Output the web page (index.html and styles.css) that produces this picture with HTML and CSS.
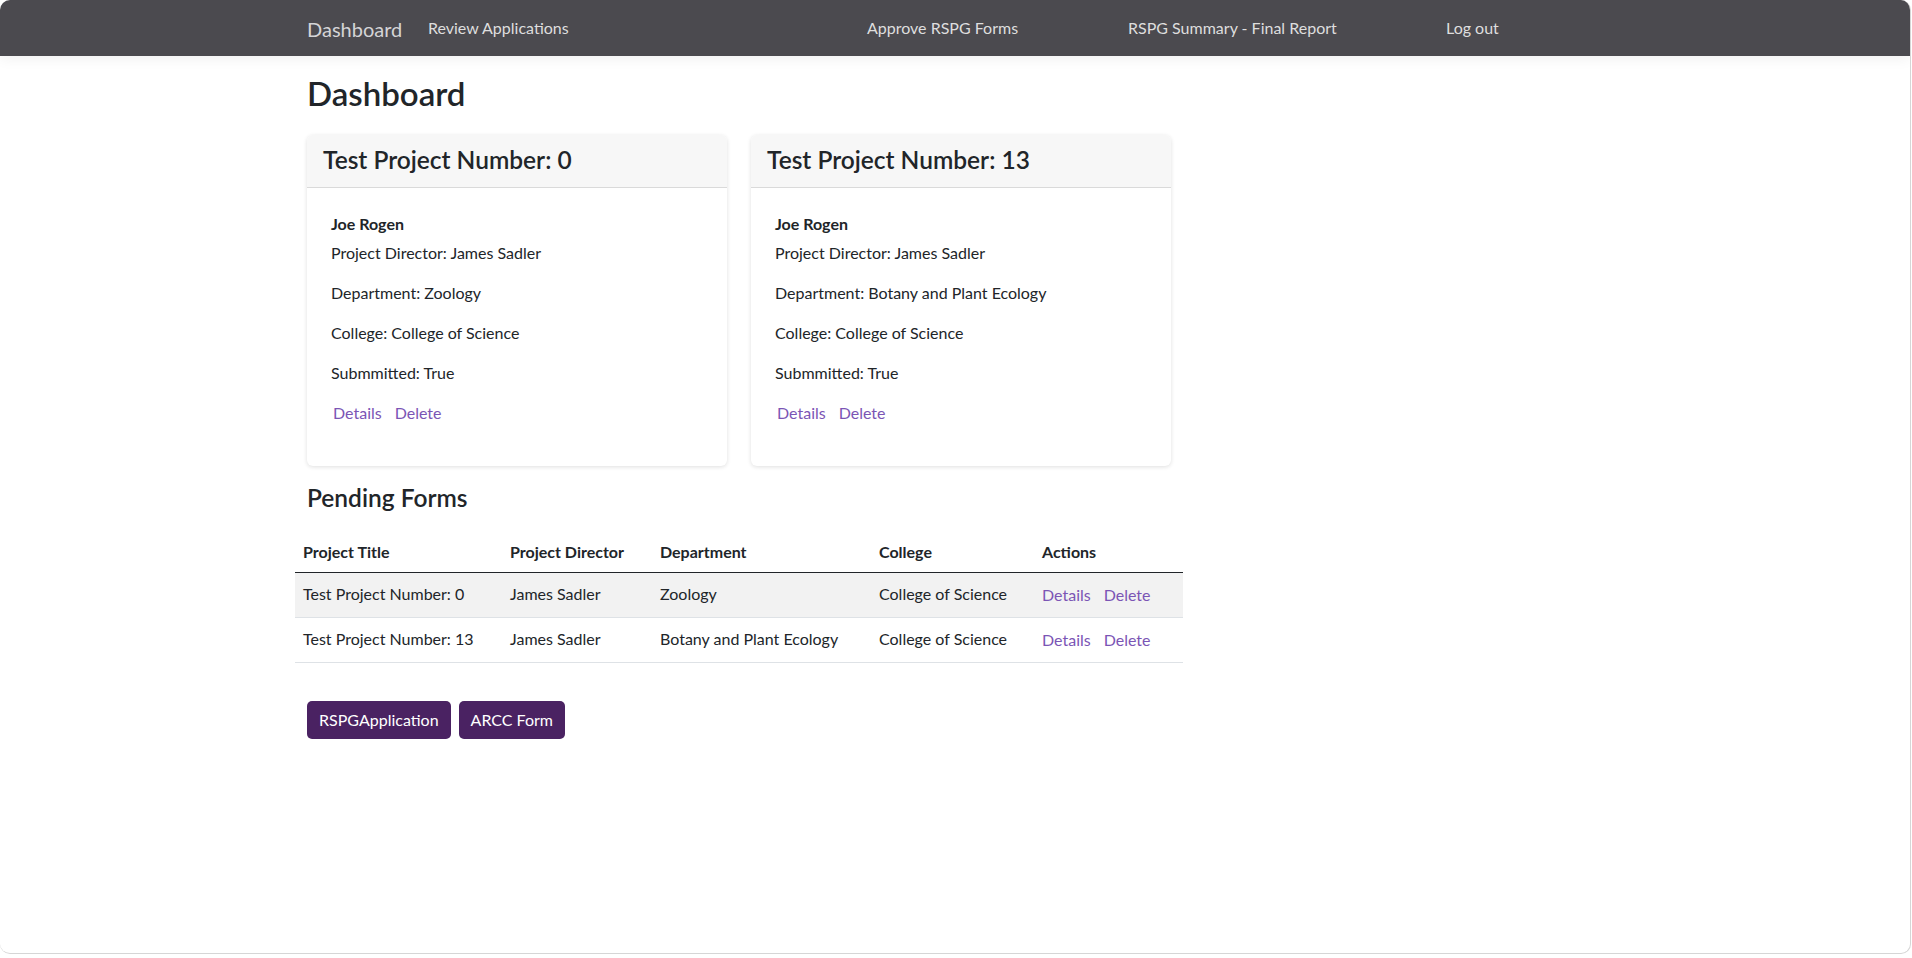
FILE: index.html
```html
<!DOCTYPE html>
<html lang="en">
<head>
<meta charset="utf-8">
<title>Dashboard</title>
<link rel="stylesheet" href="styles.css">
</head>
<body>
<div class="window">
  <header class="navbar">
    <nav class="nav-inner">
      <a class="brand" href="#">Dashboard</a>
      <a class="nav-link" href="#">Review Applications</a>
      <a class="nav-link" href="#">Approve RSPG Forms</a>
      <a class="nav-link" href="#">RSPG Summary - Final Report</a>
      <a class="nav-link" href="#">Log out</a>
    </nav>
  </header>
  <main class="container">
    <h1 class="page-title">Dashboard</h1>
    <div class="cards">
      <section class="card">
        <div class="card-header"><h4 class="card-title">Test Project Number: 0</h4></div>
        <div class="card-body">
          <h6 class="owner">Joe Rogen</h6>
          <p>Project Director: James Sadler</p>
          <p>Department: Zoology</p>
          <p>College: College of Science</p>
          <p>Submmitted: True</p>
          <div class="links"><a href="#">Details</a><a href="#">Delete</a></div>
        </div>
      </section>
      <section class="card">
        <div class="card-header"><h4 class="card-title">Test Project Number: 13</h4></div>
        <div class="card-body">
          <h6 class="owner">Joe Rogen</h6>
          <p>Project Director: James Sadler</p>
          <p>Department: Botany and Plant Ecology</p>
          <p>College: College of Science</p>
          <p>Submmitted: True</p>
          <div class="links"><a href="#">Details</a><a href="#">Delete</a></div>
        </div>
      </section>
    </div>
    <h4 class="section-title">Pending Forms</h4>
    <table class="forms-table">
      <colgroup>
        <col class="c1"><col class="c2"><col class="c3"><col class="c4"><col class="c5">
      </colgroup>
      <thead>
        <tr><th>Project Title</th><th>Project Director</th><th>Department</th><th>College</th><th>Actions</th></tr>
      </thead>
      <tbody>
        <tr class="striped">
          <td>Test Project Number: 0</td><td>James Sadler</td><td>Zoology</td><td>College of Science</td>
          <td><div class="links"><a href="#">Details</a><a href="#">Delete</a></div></td>
        </tr>
        <tr>
          <td>Test Project Number: 13</td><td>James Sadler</td><td>Botany and Plant Ecology</td><td>College of Science</td>
          <td><div class="links"><a href="#">Details</a><a href="#">Delete</a></div></td>
        </tr>
      </tbody>
    </table>
    <div class="buttons">
      <a class="btn" href="#">RSPGApplication</a>
      <a class="btn" href="#">ARCC Form</a>
    </div>
  </main>
</div>
</body>
</html>
```
FILE: styles.css
```css
* { box-sizing: border-box; }
html, body { margin: 0; padding: 0; background: #fff; }
body {
  font-family: Lato, "Liberation Sans", sans-serif;
  font-size: 16px;
  line-height: 1.5;
  color: #212529;
}
a { text-decoration: none; }

.window {
  width: 1911px;
  height: 954px;
  border: 1px solid #d6d6d6;
  border-top: none;
  border-left: none;
  border-radius: 10px;
  overflow: hidden;
  background: #fff;
}

.navbar {
  height: 56px;
  background: #4b4a4f;
  box-shadow: 0 4px 12px rgba(0, 0, 0, 0.05);
  position: relative;
}
.nav-inner {
  height: 100%;
  padding-left: 307px;
  display: grid;
  grid-template-columns: 121px 439px 261px 318px auto;
  align-items: center;
}
.brand {
  font-size: 20px;
  color: #d4d4d6;
  line-height: 1;
  padding-top: 2px;
}
.nav-link {
  font-size: 16px;
  color: #dedede;
  line-height: 1;
}

.container {
  padding-left: 307px;
  width: 1200px;
}
.page-title {
  margin: 18px 0 23px;
  font-size: 33px;
  font-weight: 600;
  line-height: 38px;
}

.cards {
  display: flex;
  gap: 24px;
}
.card {
  width: 420px;
  background: #fff;
  border-radius: 6px;
  box-shadow: 0 1px 4px rgba(0, 0, 0, 0.13);
  overflow: hidden;
}
.card-header {
  background: #f7f7f7;
  border-bottom: 1px solid #dadada;
  padding: 10px 16px 13px;
}
.card-title {
  margin: 0;
  font-size: 24.5px;
  font-weight: 600;
  line-height: 29px;
}
.card-body {
  padding: 26px 24px 25px;
}
.owner {
  margin: 0 0 8px;
  font-size: 16px;
  font-weight: 700;
  line-height: 19px;
}
.card-body p {
  margin: 0 0 16px;
}
.links {
  display: flex;
  gap: 13px;
}
.links a {
  color: #7b55b5;
}
.card-body .links {
  padding-left: 2px;
  margin-top: 2px;
  margin-bottom: 16px;
}

.section-title {
  margin: 17px 0 20px;
  font-size: 24.5px;
  font-weight: 600;
  line-height: 29px;
}

.forms-table {
  margin-left: -12px;
  width: 888px;
  border-collapse: collapse;
  table-layout: fixed;
}
.c1 { width: 207px; }
.c2 { width: 150px; }
.c3 { width: 219px; }
.c4 { width: 163px; }
.c5 { width: 149px; }
.forms-table th {
  text-align: left;
  font-weight: 700;
  padding: 8px;
  border-bottom: 1px solid #212529;
}
.forms-table td {
  padding: 9px 8px 10px;
  border-bottom: 1px solid #dee2e6;
  vertical-align: top;
}
.forms-table tr.striped td {
  background: #f2f2f2;
}
.forms-table td .links {
  padding-top: 1px;
}

.buttons {
  display: flex;
  gap: 8px;
  margin-top: 38px;
}
.btn {
  display: inline-block;
  background: #4a2262;
  color: #fff;
  border-radius: 5px;
  padding: 7px 12px;
  line-height: 24px;
  font-size: 16px;
}
```
